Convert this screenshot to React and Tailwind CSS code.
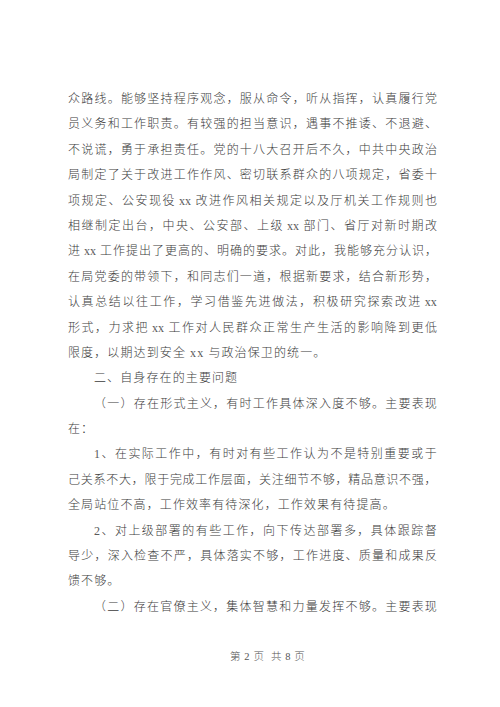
const lines = [
  { t: '众路线。能够坚持程序观念，服从命令，听从指挥，认真履行党', j: true },
  { t: '员义务和工作职责。有较强的担当意识，遇事不推诿、不退避、', j: true },
  { t: '不说谎，勇于承担责任。党的十八大召开后不久，中共中央政治', j: true },
  { t: '局制定了关于改进工作作风、密切联系群众的八项规定，省委十', j: true },
  { t: '项规定、公安现役 xx 改进作风相关规定以及厅机关工作规则也', j: true },
  { t: '相继制定出台，中央、公安部、上级 xx 部门、省厅对新时期改', j: true },
  { t: '进 xx 工作提出了更高的、明确的要求。对此，我能够充分认识，', j: true },
  { t: '在局党委的带领下，和同志们一道，根据新要求，结合新形势，', j: true },
  { t: '认真总结以往工作，学习借鉴先进做法，积极研究探索改进 xx', j: true },
  { t: '形式，力求把 xx 工作对人民群众正常生产生活的影响降到更低', j: true },
  { t: '限度，以期达到安全 xx 与政治保卫的统一。' },
  { t: '二、自身存在的主要问题', i: true },
  { t: '（一）存在形式主义，有时工作具体深入度不够。主要表现', j: true, i: true },
  { t: '在：' },
  { t: '1、在实际工作中，有时对有些工作认为不是特别重要或于', j: true, i: true },
  { t: '己关系不大，限于完成工作层面，关注细节不够，精品意识不强，', j: true },
  { t: '全局站位不高，工作效率有待深化，工作效果有待提高。' },
  { t: '2、对上级部署的有些工作，向下传达部署多，具体跟踪督', j: true, i: true },
  { t: '导少，深入检查不严，具体落实不够，工作进度、质量和成果反', j: true },
  { t: '馈不够。' },
  { t: '（二）存在官僚主义，集体智慧和力量发挥不够。主要表现', j: true, i: true },
];

// split a line into justify units: CJK chars one by one, latin runs kept whole
const tokens = (s) => s.match(/\s*[A-Za-z0-9]+\s*|./g) || [];
const isLatin = (tk) => /[A-Za-z0-9]/.test(tk);

const Token = ({ tk }) => (
  <span className={`whitespace-pre ${isLatin(tk) ? 'text-[#5a5a5a]' : ''}`}>{tk}</span>
);

const Line = ({ line }) => {
  const parts = tokens(line.t);
  if (line.j) {
    return (
      <div className={`flex justify-between h-[25.4px] leading-[25.4px] ${line.i ? 'pl-[26px]' : ''}`}>
        {parts.map((tk, idx) => (
          <Token key={idx} tk={tk} />
        ))}
      </div>
    );
  }
  return (
    <div className={`h-[25.4px] leading-[25.4px] tracking-[1.1px] whitespace-pre ${line.i ? 'pl-[26px]' : ''}`}>
      {parts.map((tk, idx) => (
        <Token key={idx} tk={tk} />
      ))}
    </div>
  );
};

export default function App() {
  return (
    <div className="w-[500px] h-[707px] bg-white overflow-hidden pt-[87px] pl-[68px] font-['Liberation_Serif','Noto_Sans_CJK_SC',serif]">
      {/* body text */}
      <div className="w-[369px] text-[12px] font-light text-[#3c3c3c]">
        {lines.map((l, idx) => (
          <Line key={idx} line={l} />
        ))}
      </div>

      {/* page footer */}
      <div className="mt-[29px] w-[369px] pl-[162px] text-[10.5px] leading-[16px] tracking-[0.6px] font-light text-[#555555] whitespace-pre">
        第 2 页  共 8 页
      </div>
    </div>
  );
}
